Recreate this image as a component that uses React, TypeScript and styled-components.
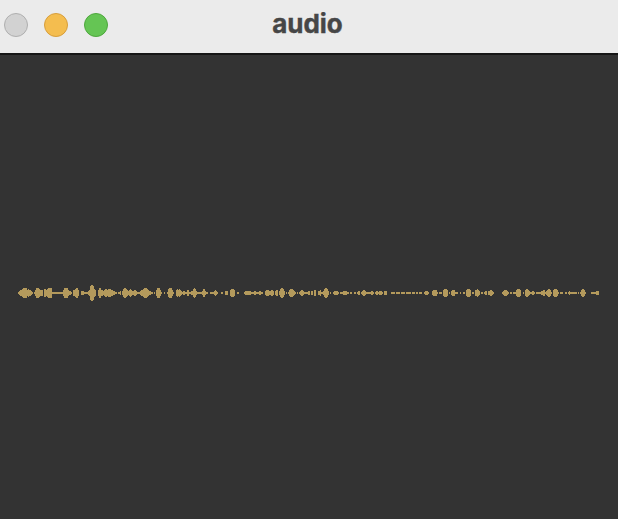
import React from 'react';
import styled, { createGlobalStyle } from 'styled-components';

const GlobalStyle = createGlobalStyle`
  body { margin: 0; background: #333333; overflow: hidden; }
`;

const Window = styled.main`
  display: flex;
  flex-direction: column;
  width: 618px;
  height: 519px;
  background: #333333;
`;

const TitleBar = styled.header`
  box-sizing: border-box;
  display: grid;
  grid-template-columns: 112px 1fr 119px;
  height: 55px;
  padding: 0 0 5px 4px;
  align-items: center;
  background: #ebebeb;
  border-bottom: 2px solid #161616;
`;

const Controls = styled.div`
  display: flex;
  gap: 16px;
`;

const Control = styled.span<{ $fill: string; $edge: string }>`
  box-sizing: border-box;
  width: 24px;
  height: 24px;
  margin-top: 2px;
  border: 1px solid ${(p) => p.$edge};
  border-radius: 50%;
  background: ${(p) => p.$fill};
`;

const Title = styled.h1`
  margin: 0;
  text-align: center;
  font: 700 26px/32px Inter, sans-serif;
  color: #464646;
  -webkit-text-stroke: 0.4px #464646;
`;

const Canvas = styled.section`
  flex: 1;
  padding-top: 228px;
`;

const Wave = styled.svg`
  display: block;
  width: 618px;
  height: 20px;
`;

// Runs of one-pixel columns: start position and half-height of each column.
const runs: [number, string][] = [
  [18, '123345555343321'], [34, '1'], [35, '35554333'], [44, '44345555'],
  [52, '11'], [54, '11111111'], [62, '1355553220'], [71, '1'], [73, '334553'], [81, '22211'],
  [86, '1123788743'], [98, '3553323443444332211'], [117, '0112'], [122, '2455432'],
  [129, '34322'], [134, '3321'], [138, '11233455543221'], [152, '1'], [154, '1'],
  [156, '3555310'], [164, '1'], [167, '14555310'], [176, '343432'],
  [182, '1221'], [186, '1331'], [190, '1221'], [193, '45421111'],
  [201, '1244211'], [210, '1111'], [213, '12321'], [221, '11'],
  [225, '222'], [230, '34443'], [237, '11'], [244, '122222211'],
  [253, '12211'], [258, '1221'], [262, '1'], [265, '23332'],
  [270, '23320'], [275, '233'], [279, '245542'], [286, '1'],
  [288, '13444321'], [297, '1'], [299, '1233211'], [306, '11220'],
  [311, '2203300223'], [321, '11245542'], [330, '1'], [333, '122221'],
  [340, '111222211'], [350, '11'], [354, '11'], [357, '122'], [361, '123321'],
  [367, '1111221'], [375, '1221'], [379, '2221'], [384, '222'],
  [391, '1111'], [396, '1111'], [401, '1111'], [406, '11111'], [412, '111'],
  [416, '11'], [419, '111'], [424, '12221'], [432, '233331'], [439, '111'],
  [443, '34443'], [449, '1'], [451, '23331'], [456, '11'], [460, '1'],
  [463, '11'], [466, '34443'], [472, '11'], [475, '33432'], [481, '11'],
  [484, '122'], [488, '223321'], [502, '12333210'], [510, '11'], [513, '111'],
  [516, '34443'], [523, '1'], [525, '34432'], [530, '11221'],
  [536, '11111'], [541, '2233123443'], [551, '1'], [553, '344431'],
  [560, '111'], [565, '11'], [568, '121111111'], [578, '1'],
  [580, '134431'], [591, '1111'], [595, '1222'],
];

const wavePath = runs
  .flatMap(([start, heights]) =>
    [...heights].map((digit, i) => {
      const h = Number(digit);
      return h ? `M${start + i} ${10 - h}h1v${h * 2}h-1z` : '';
    }),
  )
  .join('');

export default function App() {
  return (
    <>
      <GlobalStyle />
      <Window>
        <TitleBar>
          <Controls>
            <Control $fill="#d2d2d2" $edge="#afafaf" />
            <Control $fill="#f4bd4f" $edge="#d79e3c" />
            <Control $fill="#65c554" $edge="#4ea73d" />
          </Controls>
          <Title>audio</Title>
        </TitleBar>
        <Canvas>
          <Wave viewBox="0 0 618 20" shapeRendering="crispEdges">
            <path d={wavePath} fill="#b49a5c" />
          </Wave>
        </Canvas>
      </Window>
    </>
  );
}
